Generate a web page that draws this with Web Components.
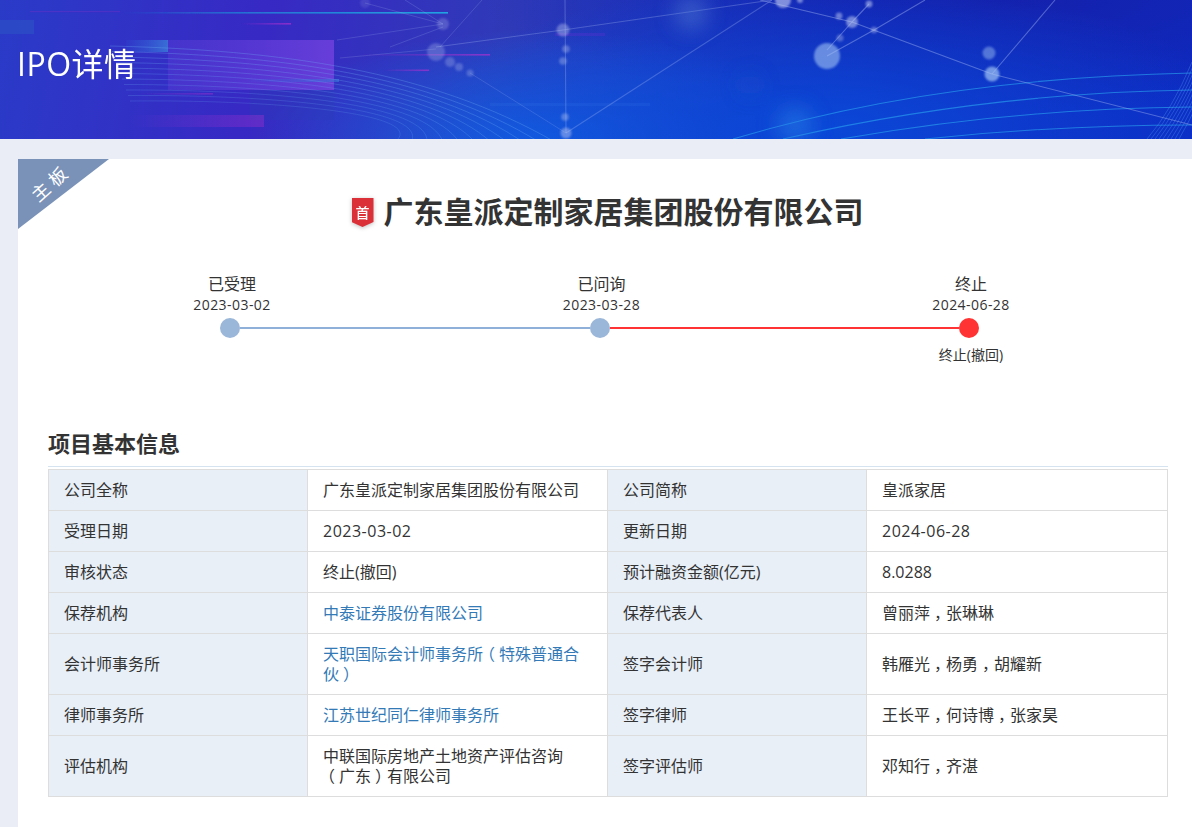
<!DOCTYPE html>
<html lang="zh-CN"><head><meta charset="utf-8"><title>IPO详情</title>
<style>
html,body{margin:0;padding:0;height:827px;overflow:hidden;background:#eaedf5;font-family:"Open Sans","Noto Sans CJK SC",sans-serif;color:#333}
.p{font-feature-settings:"halt" 1;padding:0 4px;text-spacing-trim:space-all}
</style></head><body>
<ipo-banner>IPO详情</ipo-banner>
<ipo-card>
  <board-tag slot="tag">主 板</board-tag>
  <company-title>广东皇派定制家居集团股份有限公司</company-title>
  <ipo-timeline></ipo-timeline>
  <section-title>项目基本信息</section-title>
  <info-table>
    <info-cell label>公司全称</info-cell><info-cell>广东皇派定制家居集团股份有限公司</info-cell><info-cell label>公司简称</info-cell><info-cell>皇派家居</info-cell>
    <info-cell label>受理日期</info-cell><info-cell date>2023-03-02</info-cell><info-cell label>更新日期</info-cell><info-cell date>2024-06-28</info-cell>
    <info-cell label>审核状态</info-cell><info-cell>终止(撤回)</info-cell><info-cell label>预计融资金额(亿元)</info-cell><info-cell>8.0288</info-cell>
    <info-cell label>保荐机构</info-cell><info-cell link>中泰证券股份有限公司</info-cell><info-cell label>保荐代表人</info-cell><info-cell>曾丽萍<span class="p">，</span>张琳琳</info-cell>
    <info-cell label>会计师事务所</info-cell><info-cell link>天职国际会计师事务所<span class="p">（</span>特殊普通合<wbr>伙<span class="p">）</span></info-cell><info-cell label>签字会计师</info-cell><info-cell>韩雁光<span class="p">，</span>杨勇<span class="p">，</span>胡耀新</info-cell>
    <info-cell label>律师事务所</info-cell><info-cell link>江苏世纪同仁律师事务所</info-cell><info-cell label>签字律师</info-cell><info-cell>王长平<span class="p">，</span>何诗博<span class="p">，</span>张家昊</info-cell>
    <info-cell label>评估机构</info-cell><info-cell>中联国际房地产土地资产评估咨询<span class="p">（</span>广东<span class="p">）</span>有限公司</info-cell><info-cell label>签字评估师</info-cell><info-cell>邓知行<span class="p">，</span>齐湛</info-cell>
  </info-table>
</ipo-card>
<script>
function define(name, html, init){
  customElements.define(name, class extends HTMLElement{
    constructor(){super();this.attachShadow({mode:'open'}).innerHTML=html;}
    connectedCallback(){ if(init) init(this); }
  });
}
const dots=(arr,fill)=>arr.map(([x,y,r,o])=>`<circle cx="${x}" cy="${y}" r="${r}" fill="${fill}" opacity="${o}"/>`).join('');
const lines=(arr,c,o,w)=>arr.map(a=>`<line x1="${a[0]}" y1="${a[1]}" x2="${a[2]}" y2="${a[3]}" stroke="${c}" stroke-opacity="${o}" stroke-width="${w}"/>`).join('');
const leftArcs=Array.from({length:11},(_,i)=>{const d=i*5.5;return `<path d="M${110+i*2} ${46+d} C 280 ${50+d*.9}, 430 ${70+d*.8}, ${555-i*16} 142" fill="none" stroke="#6fb0f5" stroke-opacity="${.34-.012*i}" stroke-width=".9"/>`}).join('');
const hatch=Array.from({length:9},(_,i)=>`<path d="M${1147+i*4} 139 Q ${1172+i*3} 110 ${1192+i*3} 62" fill="none" stroke="#4f9cf2" stroke-opacity=".5" stroke-width=".7"/>`).join('');
define('ipo-banner',`<style>
:host{display:flex;align-items:center;position:relative;height:139px;box-sizing:border-box;padding:0 0 11px 17px;overflow:hidden;color:#fff;font-size:32px;letter-spacing:.5px;line-height:44px;
background:
 radial-gradient(420px 150px at 830px 130px,#0a48d8 0,rgba(10,72,216,0) 100%),
 radial-gradient(280px 110px at 540px 140px,#1460e2 0,rgba(20,96,226,0) 100%),
 radial-gradient(520px 110px at 1000px 0,#1421ad 0,rgba(20,33,173,0) 100%),
 linear-gradient(102deg,#2a3bc8 0,#3729c4 22%,#2f3ab8 42%,#2039bf 55%,#1329bb 75%,#0c2cc4 100%);}
svg{position:absolute;left:0;top:0;width:1192px;height:139px}
span{position:relative}
</style>
<svg viewBox="0 0 1192 139" aria-hidden="true">
<defs><filter id="b" x="-50%" y="-50%" width="200%" height="200%"><feGaussianBlur stdDeviation=".8"/></filter>
<filter id="g" x="-100%" y="-100%" width="300%" height="300%"><feGaussianBlur stdDeviation="10"/></filter>
<filter id="s" x="-5%" y="-100%" width="110%" height="300%"><feGaussianBlur stdDeviation=".5"/></filter>
<linearGradient id="p" x1="0" x2="1"><stop offset="0" stop-color="#5a3bd6" stop-opacity=".45"/><stop offset="1" stop-color="#6d3fdc" stop-opacity=".9"/></linearGradient>
<linearGradient id="c" x1="0" x2="1"><stop offset="0" stop-color="#19a6e0" stop-opacity="0"/><stop offset=".35" stop-color="#19a6e0" stop-opacity=".55"/><stop offset="1" stop-color="#21b0e6" stop-opacity=".9"/></linearGradient>
<linearGradient id="m" x1="0" x2="1"><stop offset="0" stop-color="#b030d0" stop-opacity="0"/><stop offset="1" stop-color="#b030d0" stop-opacity=".7"/></linearGradient>
<linearGradient id="q" x1="0" x2="1"><stop offset="0" stop-color="#2c66d8" stop-opacity=".1"/><stop offset="1" stop-color="#3a7ad8" stop-opacity=".85"/></linearGradient></defs>
<rect x="0" y="20" width="34" height="14" fill="#2b58c6" opacity=".5"/>
<rect x="168" y="40" width="166" height="50" fill="url(#p)"/>
<rect x="126" y="40" width="42" height="12" fill="url(#q)"/>
<rect x="250" y="90" width="85" height="30" fill="#2a3cb8" opacity=".4"/>
<rect x="130" y="115" width="134" height="12" fill="url(#m)" opacity=".5"/>
<g filter="url(#s)">
<rect x="122" y="12" width="326" height="1.6" fill="url(#c)"/>
<rect x="30" y="11" width="90" height="1.2" fill="#8a2cc8" opacity=".3"/>
<rect x="241" y="23" width="50" height="1.6" fill="url(#m)"/>
<rect x="360" y="54" width="130" height="1.6" fill="url(#m)"/>
<rect x="383" y="69.5" width="46" height="1.6" fill="url(#m)"/>
<rect x="138" y="93" width="75" height="1.6" fill="url(#m)" opacity=".6"/>
<rect x="249" y="79" width="90" height="3" fill="url(#q)" opacity=".7"/>
</g>
<rect x="490" y="103" width="160" height="3" fill="#3f8af0" opacity=".12"/>
<rect x="555" y="33" width="50" height="3" fill="#5530d0" opacity=".4"/>
${leftArcs}
<g fill="none" stroke="#2aa0ee" stroke-opacity=".65" stroke-width="1.1">
<path d="M733 139 C 880 95, 1040 76, 1192 73"/><path d="M783 139 C 910 110, 1050 92, 1192 90"/><path d="M841 139 C 950 120, 1070 108, 1192 107"/><path d="M925 139 C 1010 130, 1100 125, 1192 125"/></g>
${hatch}
${lines([[405,0,443,24],[443,24,337,40],[443,27,390,47],[482,0,440,47],[436,49,340,58],[365,3,443,24],[470,73,566,133]],'#a9bdf2',.2,1)}
${lines([[436,47,563,30],[563,30,772,0],[565,0,566,133],[566,133,772,0]],'#a9bdf2',.3,1.1)}
${lines([[760,0,852,22],[852,22,992,74],[852,22,869,4],[852,22,827,50],[827,56,874,30],[874,30,925,0],[992,74,1055,0],[992,74,1192,125]],'#a9bdf2',.42,1.1)}
<g filter="url(#g)"><circle cx="691" cy="13" r="17" fill="#5a86d8" opacity=".45"/><circle cx="795" cy="125" r="18" fill="#2a86e8" opacity=".5"/><circle cx="750" cy="85" r="10" fill="#2458cc" opacity=".35"/></g>
<g filter="url(#b)">
${dots([[443,24,6,.25],[436,52,9,.28],[450,62,5,.28],[459,67,4,.28],[470,73,3.5,.28],[365,3,5,.13],[563,30,6.5,.4],[566,49,3.8,.35],[563,61,3.8,.35],[565,117,3.8,.38],[566,133,5.5,.45],[783,0,8,.62],[800,0,3,.55],[839,16,3.4,.5],[852,22,6,.55],[869,4,3.4,.55],[874,30,3.2,.42],[840,38,3.5,.35]],'#c3cdf2')}
${dots([[827,56,13,.58],[989,53,6.5,.45],[992,74,7.5,.68]],'#a5c8f5')}
</g></svg><span><slot></slot></span>`);
define('ipo-card',`<style>
:host{display:block;position:relative;margin:20px 0 0 18px;background:#fff;padding:31px 24px 0 30px;height:668px;box-sizing:border-box}
</style><slot name="tag"></slot><slot></slot>`);
define('board-tag',`<style>
:host{display:block;position:absolute;left:0;top:0;width:91px;height:70px;background:#7a92b8;clip-path:polygon(0 0,100% 0,0 100%);color:#fff;font-size:18px;line-height:24px}
span{position:absolute;left:3px;top:13px;width:56px;text-align:center;transform:rotate(-42deg);white-space:pre}
</style><span><slot></slot></span>`);
define('company-title',`<style>
:host{display:flex;justify-content:center;align-items:center;gap:10px;height:44px;margin:0 0 0 -3px;padding-left:2px;font-size:30px;line-height:44px;font-weight:700;color:#333;white-space:nowrap}
.b{display:flex;justify-content:center;padding-top:5px;box-sizing:border-box;width:22px;height:29px;margin-top:1px;background:#dc3039;clip-path:polygon(0 0,100% 0,100% 24px,50% 100%,0 24px);color:#fff;font-size:14px;line-height:20px;font-weight:500}
.w{filter:drop-shadow(0 1px 2px rgba(0,0,0,.25))}
</style><div class="w"><div class="b">首</div></div><div><slot></slot></div>`);
define('ipo-timeline',`<style>
:host{display:block;margin:39px 0 0 134px;width:839px}
.labels{display:flex;justify-content:space-between}
.l{width:100px;text-align:center;font-size:14px;letter-spacing:.45px;line-height:20px;color:#333}
.l b{display:block;font-weight:400;font-size:16px;letter-spacing:0;line-height:22px}
.track{display:flex;align-items:center;margin:3px 0 0 38px;width:759px}
.d{width:20px;height:20px;border-radius:50%;background:#9ab6d9;flex:none}
.d.r{background:#ff3333}
.i{flex:1;height:2px;background:#8fb0d9}
.i.r{background:#ff3333}
.note{text-align:center;font-size:14px;line-height:18px;margin:8px 0 0 739px;width:100px}
</style><div class="labels">
<div class="l"><b>已受理</b>2023-03-02</div><div class="l"><b>已问询</b>2023-03-28</div><div class="l"><b>终止</b>2024-06-28</div></div>
<div class="track"><div class="d"></div><div class="i"></div><div class="d"></div><div class="i r"></div><div class="d r"></div></div>
<div class="note">终止(撤回)</div>`);
define('section-title',`<style>
:host{display:block;margin-top:64px;height:38px;line-height:30px;font-size:22px;font-weight:700;color:#333;border-bottom:1px solid #d5e2ef;box-sizing:content-box}
</style><slot></slot>`);
define('info-table',`<style>
:host{display:grid;grid-template-columns:259px 300px 259px 301px;width:1120px;margin-top:2px;border-top:1px solid #ddd;border-left:1px solid #ddd;box-sizing:border-box}
</style><slot></slot>`);
define('info-cell',`<style>
:host{display:flex;align-items:center;box-sizing:border-box;padding:10px 15px;border-right:1px solid #ddd;border-bottom:1px solid #ddd;font-size:16px;line-height:20px;color:#333;min-height:41px}
:host([label]){background:#e8eff7}
:host([link]){color:#337ab7}
:host([date]){letter-spacing:.5px}
</style><div><slot></slot></div>`);
</script>
</body></html>
